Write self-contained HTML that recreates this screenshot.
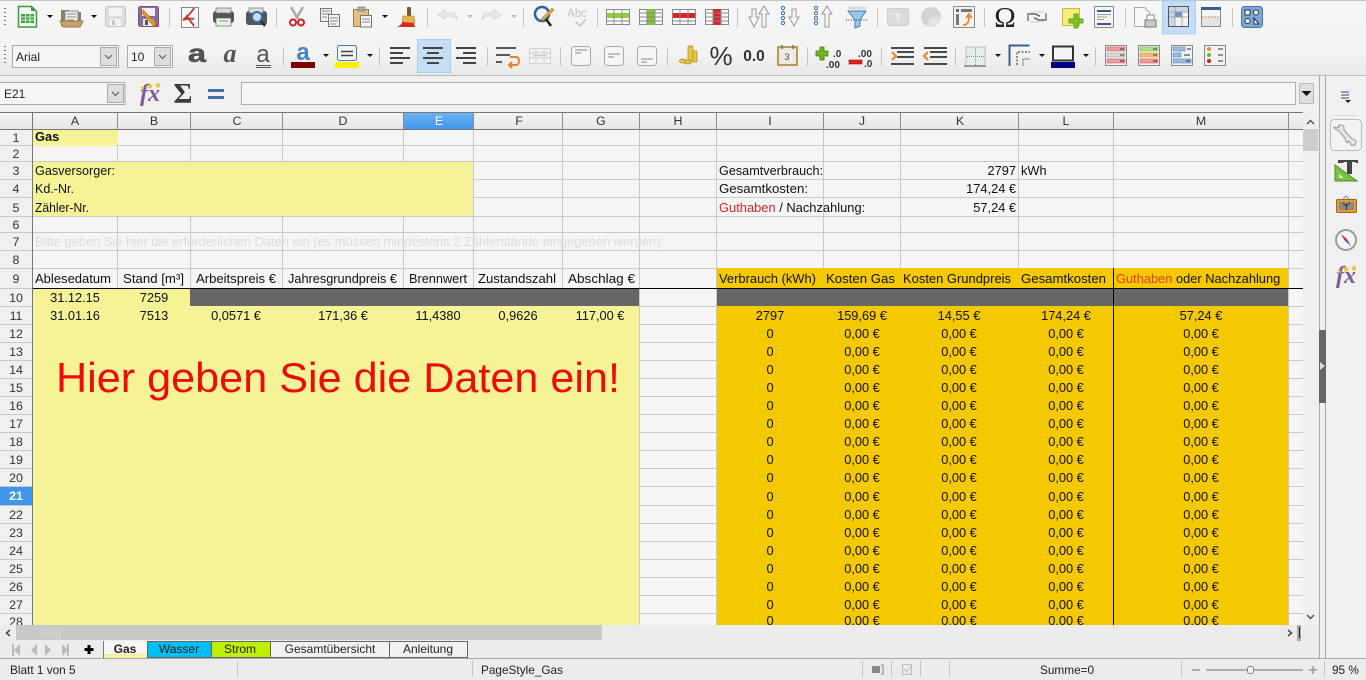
<!DOCTYPE html>
<html><head><meta charset="utf-8"><title>Gas</title>
<style>
html,body{margin:0;padding:0;background:#f0f0f0;overflow:hidden;width:1366px;height:680px}
svg{display:block;font-family:"Liberation Sans",Arial,sans-serif}
.c text{font-size:12.8px;fill:#111}
.m text{text-anchor:middle}
.e{text-anchor:end}
.h text{font-size:12.4px;fill:#333;text-anchor:middle}
.g line{stroke:#c9c9c9;stroke-width:1}
.s line{stroke:#c4c4c4;stroke-width:1}
.d{fill:#111}
</style></head><body>
<svg width="1366" height="680" viewBox="0 0 1366 680" xmlns="http://www.w3.org/2000/svg">
<defs>
<linearGradient id="tb" x1="0" y1="0" x2="0" y2="1"><stop offset="0" stop-color="#f6f6f6"/><stop offset=".7" stop-color="#f3f3f3"/><stop offset="1" stop-color="#e9e9e9"/></linearGradient>
<linearGradient id="hd" x1="0" y1="0" x2="0" y2="1"><stop offset="0" stop-color="#f4f4f4"/><stop offset="1" stop-color="#e6e6e6"/></linearGradient>
<linearGradient id="sel" x1="0" y1="0" x2="0" y2="1"><stop offset="0" stop-color="#6fb4f4"/><stop offset="1" stop-color="#3f95ec"/></linearGradient>
<clipPath id="sheet"><rect x="0" y="112" width="1303" height="513"/></clipPath>
</defs>

<!-- toolbars -->
<rect width="1366" height="112" fill="#f0f0f0"/>
<rect y="1" width="1366" height="74" fill="url(#tb)"/>
<rect width="1366" height="1" fill="#c4c4c4"/>
<rect y="75" width="1366" height="1" fill="#bdbdbd"/>
<rect x="1162.500" y="1" width="33" height="33" fill="#c5def5" stroke="#a9d0f0"/>
<rect x="417.500" y="39.500" width="33" height="33" fill="#c5def5" stroke="#a9d0f0"/>

<!-- grips -->
<g fill="#777"><rect x="4" y="8" width="2" height="1"/><rect x="4" y="12" width="2" height="1"/><rect x="4" y="16" width="2" height="1"/><rect x="4" y="20" width="2" height="1"/><rect x="4" y="24" width="2" height="1"/><rect x="4" y="46" width="2" height="1"/><rect x="4" y="50" width="2" height="1"/><rect x="4" y="54" width="2" height="1"/><rect x="4" y="58" width="2" height="1"/><rect x="4" y="62" width="2" height="1"/></g>

<!-- separators -->
<g class="s">
<line x1="169.500" y1="8" x2="169.500" y2="27"/><line x1="276.500" y1="8" x2="276.500" y2="27"/><line x1="427.500" y1="8" x2="427.500" y2="27"/><line x1="523.500" y1="8" x2="523.500" y2="27"/><line x1="597.500" y1="8" x2="597.500" y2="27"/><line x1="737.500" y1="8" x2="737.500" y2="27"/><line x1="877.500" y1="8" x2="877.500" y2="27"/><line x1="984.500" y1="8" x2="984.500" y2="27"/><line x1="1125.500" y1="8" x2="1125.500" y2="27"/><line x1="1232.500" y1="8" x2="1232.500" y2="27"/>
<line x1="283.500" y1="47" x2="283.500" y2="66"/><line x1="379.500" y1="47" x2="379.500" y2="66"/><line x1="487.500" y1="47" x2="487.500" y2="66"/><line x1="560.500" y1="47" x2="560.500" y2="66"/><line x1="667.500" y1="47" x2="667.500" y2="66"/><line x1="807.500" y1="47" x2="807.500" y2="66"/><line x1="881.500" y1="47" x2="881.500" y2="66"/><line x1="955.500" y1="47" x2="955.500" y2="66"/><line x1="1095.500" y1="47" x2="1095.500" y2="66"/>
</g>

<!-- small dropdown arrows -->
<g class="d">
<path d="M47 15h6l-3 3zM91 15h6l-3 3zM382 15h6l-3 3z"/>
<path d="M323 54h6l-3 3zM367 54h6l-3 3zM995 54h6l-3 3zM1039 54h6l-3 3zM1083 54h6l-3 3z"/>
</g>
<path d="M467 15h6l-3 3zM511 15h6l-3 3z" fill="#bbb"/>

<!-- ROW 1 ICONS -->
<!-- calc new -->
<path d="M18.500 6.500h13l5 5v15.500h-18z" fill="#f4fbf2" stroke="#3f9a3f" stroke-width="1.500"/><path d="M31 6l5 5h-5z" fill="#3a9a3a"/><rect x="21" y="14" width="13" height="9" fill="#3da33d"/><path d="M21 17h13M21 20h13M25.500 14v9M30 14v9" stroke="#d8f0d8"/>
<!-- open -->
<path d="M61 10h8l2 2h10v14H61z" fill="#8f7f66"/><rect x="65" y="11" width="13" height="12" fill="#f0efe8" stroke="#888"/><path d="M67 14h9M67 17h9M67 20h7" stroke="#888"/><path d="M60 21h23l-3 6H63z" fill="#c8a06a" stroke="#9a7a4c"/>
<!-- save grey -->
<rect x="105.500" y="6.500" width="20" height="20" rx="2" fill="#dedede" stroke="#c8c8c8"/><rect x="109" y="8" width="13" height="8" fill="#f3f3f3"/><rect x="110" y="19" width="11" height="7" fill="#f4f4f4"/><rect x="112" y="20" width="3" height="5" fill="#c8c8c8"/>
<!-- save as -->
<rect x="138.500" y="6.500" width="20" height="20" rx="2" fill="#8a6d98" stroke="#6d5a7c"/><rect x="142" y="8" width="13" height="8" fill="#f2eef4"/><rect x="143" y="19" width="11" height="7" fill="#e8e8e8"/><rect x="145" y="20" width="3" height="5" fill="#555"/><path d="M143 10l14 14-3 2-13-14z" fill="#e79a33" stroke="#a85f1a" stroke-width=".6"/><path d="M156 24l4 3-5-.5z" fill="#d33"/>
<!-- pdf -->
<rect x="181.500" y="7.500" width="17" height="20" fill="#f7f7f7" stroke="#888"/><path d="M194 8c-3 6-8 9-11 12 3-1 6-2 11-1M187 15c0 3 4 6 7 11" fill="none" stroke="#c9302c" stroke-width="1.800"/>
<!-- print -->
<rect x="213" y="11" width="21" height="12" rx="3" fill="#555"/><rect x="216" y="8" width="15" height="5" fill="#ddd" stroke="#777" stroke-width=".7"/><rect x="216" y="18" width="15" height="8" fill="#eaf3e8" stroke="#666" stroke-width=".7"/><path d="M219 21h9" stroke="#6a6"/>
<!-- preview -->
<rect x="246" y="11" width="21" height="14" rx="3" fill="#555"/><rect x="249" y="8" width="14" height="5" fill="#ddd" stroke="#777" stroke-width=".7"/><circle cx="257" cy="17" r="5" fill="#cde" stroke="#2f6db0" stroke-width="2"/><path d="M261 21l4 5" stroke="#333" stroke-width="2.500"/>
<!-- cut -->
<path d="M291 7l7 12M303 7l-7 12" stroke="#aaa" stroke-width="2.500"/><circle cx="293" cy="22.500" r="3" fill="none" stroke="#c22" stroke-width="2"/><circle cx="301" cy="22.500" r="3" fill="none" stroke="#c22" stroke-width="2"/>
<!-- copy -->
<rect x="320.500" y="8.500" width="11" height="13" fill="#f2f2f2" stroke="#777"/><path d="M322 11h8M322 14h8M322 17h5" stroke="#888"/><rect x="328.500" y="14.500" width="11" height="12" fill="#f2f2f2" stroke="#777"/><path d="M330 18h8M330 21h8M330 24h6" stroke="#888"/>
<!-- paste -->
<rect x="353.500" y="9.500" width="15" height="17" fill="#e6bd85" stroke="#a07a45"/><rect x="358" y="7" width="7" height="4" fill="#aaa" stroke="#777" stroke-width=".6"/><rect x="360.500" y="15.500" width="11" height="11.500" fill="#f4f4f4" stroke="#777"/><path d="M362 19h8M362 22h8" stroke="#888"/>
<!-- brush -->
<rect x="407" y="7" width="4" height="9" rx="1" fill="#7a5a30"/><path d="M403 16h11l1 7h-13z" fill="#e7b54e" stroke="#9a7a30" stroke-width=".6"/><path d="M397 27c3-1 5-4 6-5l11 1 1 4z" fill="#d62828"/>
<!-- undo / redo -->
<path d="M438 15l7-5v3h7c4 0 5 3 5 7-1-3-3-4-5-4h-7v3z" fill="#ececec" stroke="#d6d6d6"/>
<path d="M501 15l-7-5v3h-7c-4 0-5 3-5 7 1-3 3-4 5-4h7v3z" fill="#ececec" stroke="#d6d6d6"/>
<!-- find -->
<circle cx="542" cy="14" r="7" fill="#eef4fb" stroke="#2f5f9f" stroke-width="2.500"/><path d="M546 19l5 7" stroke="#222" stroke-width="2.500"/><path d="M541 19l11-11 2 2-11 11z" fill="#e9a23b" stroke="#9a6a1a" stroke-width=".5"/>
<!-- abc -->
<text x="577" y="17" font-size="11.500" fill="#c4c4c4" text-anchor="middle">Abc</text><path d="M576 22l4 4 6-7" fill="none" stroke="#ccc" stroke-width="1.800"/>
<!-- table row/col ops -->
<g fill="#fafafa" stroke="#8a8a8a">
<rect x="606.500" y="9.500" width="23" height="15"/><rect x="639.500" y="9.500" width="23" height="15"/><rect x="672.500" y="9.500" width="23" height="15"/><rect x="705.500" y="9.500" width="23" height="15"/>
</g>
<path d="M607 13h22v5h-22z" fill="#8fce3a"/><path d="M647 9h8v16h-8z" fill="#7fc62e"/><path d="M673 13h22v5h-22z" fill="#d9232b"/><path d="M713 9h8v16h-8z" fill="#d9232b"/>
<path d="M614 10v14M622 10v14M607 21h22M647 10v14M655 10v14M640 13h22M640 17h22M640 21h22M680 10v14M688 10v14M673 21h22M713 10v14M721 10v14M706 13h22M706 17h22M706 21h22" stroke="#8a8a8a" stroke-width=".9" fill="none"/>
<!-- sort -->
<path d="M749 17h3V9h4v8h3l-5 10zM759 14l5-8 5 8h-3v13h-4V14z" fill="#f5f5f5" stroke="#9a9a9a"/>
<g fill="none" stroke="#3a6ea8"><circle cx="783" cy="8" r="1.600"/><circle cx="783" cy="13" r="1.600"/><circle cx="783" cy="18" r="1.600"/><circle cx="783" cy="23" r="1.600"/><circle cx="816" cy="8" r="1.600"/><circle cx="816" cy="13" r="1.600"/><circle cx="816" cy="18" r="1.600"/><circle cx="816" cy="23" r="1.600"/></g>
<path d="M789 17h3V9h4v8h3l-5 9z" fill="#f5f5f5" stroke="#9a9a9a"/><path d="M822 14l5-8 5 8h-3v13h-4V14z" fill="#f5f5f5" stroke="#9a9a9a"/>
<!-- filter -->
<path d="M848 11h18l-6 9v6l-5 2v-8z" fill="#9cc7ec" stroke="#4a80b4"/><path d="M848 8h18" stroke="#ddd" stroke-width="3"/><path d="M846 20h22" stroke="#333" stroke-dasharray="1 1.500"/>
<!-- image grey -->
<rect x="887.500" y="8.500" width="21" height="17" rx="2" fill="#dcdcdc" stroke="#cdcdcd"/><path d="M898 12v10M895 13l3 4 3-4" stroke="#f2f2f2" fill="none"/>
<!-- chart -->
<circle cx="931" cy="17" r="10" fill="#d4d4d4"/><path d="M931 17l10 0a10 10 0 0 1-15 8.500z" fill="#e2e2e2"/>
<!-- pivot -->
<rect x="953.500" y="6.500" width="21" height="21" fill="#f4f4f4" stroke="#888"/><rect x="956" y="9" width="3" height="3" fill="#666"/><rect x="956" y="14" width="3" height="11" fill="#777"/><rect x="961" y="9" width="11" height="3" fill="#777"/><path d="M963 25c6 0 6-6 6-9m-3 2l3-4 3 4" fill="none" stroke="#e08a2a" stroke-width="1.800"/>
<!-- omega -->
<text x="1005" y="27" font-size="29" font-family="Liberation Serif" text-anchor="middle" fill="#222">Ω</text>
<!-- hyperlink -->
<path d="M1028 14h7c2 0 3 2 5 2M1046 20h-7c-2 0-3-2-5-2" stroke="#666" stroke-width="1.600" fill="none"/><path d="M1028 13v8M1046 13v8" stroke="#999" stroke-width="2"/><path d="M1030 12h14M1030 22h14" stroke="#ccc"/>
<!-- note -->
<rect x="1062.500" y="8.500" width="17" height="17" fill="#f6ec7a" stroke="#c8b83a"/><path d="M1074 14h4v5h5v4h-5v5h-4v-5h-5v-4h5z" fill="#7ec626" stroke="#4d8f17" stroke-width=".8"/>
<!-- doc/header -->
<rect x="1094.500" y="6.500" width="19" height="21" rx="1" fill="#f6f6f6" stroke="#888"/><path d="M1097 11h14" stroke="#35598c" stroke-width="2"/><path d="M1097 14.500h14M1097 17h10M1097 19.500h7" stroke="#999"/><path d="M1097 24h14" stroke="#35598c" stroke-width="2"/>
<!-- print area -->
<path d="M1134.500 7.500h10l5 5v14h-15z" fill="#f8f8f8" stroke="#aaa"/><rect x="1145" y="20" width="11" height="7" fill="#c8c8c8" stroke="#777"/><rect x="1147" y="15" width="7" height="5" fill="#fff" stroke="#888"/>
<!-- freeze -->
<rect x="1168.500" y="6.500" width="20" height="20" fill="#f4f4f4" stroke="#555"/><rect x="1169" y="7" width="6" height="19" fill="#c9d7e6"/><rect x="1175" y="7" width="13" height="5" fill="#c9d7e6"/><rect x="1175" y="12" width="7" height="5" fill="#6f96c7"/><path d="M1175 7v19M1169 17h19M1182 12v14M1169 12h19" stroke="#999" stroke-width=".8"/>
<!-- header footer -->
<rect x="1201.500" y="7.500" width="19" height="19" fill="#e4e4e4" stroke="#888"/><rect x="1201" y="7" width="20" height="3" fill="#3b5e90"/><rect x="1202" y="10" width="18" height="7" fill="#f6f6f6"/><path d="M1202 17h18" stroke="#e8902e" stroke-dasharray="2 1"/>
<!-- shapes -->
<rect x="1241.500" y="6.500" width="21" height="21" rx="3" fill="#7ea6d6" stroke="#4a78ae"/><rect x="1245" y="10" width="5" height="5" fill="#fff" stroke="#234"/><circle cx="1256" cy="12.500" r="2.500" fill="#fff" stroke="#234"/><circle cx="1247.500" cy="21" r="2.500" fill="#fff" stroke="#234"/><path d="M1254 18l5 6h-5z" fill="#fff" stroke="#234"/>

<!-- ROW 2 -->
<rect x="12.500" y="45.500" width="106" height="22" fill="#f6f6f6" stroke="#a9a9a9"/><rect x="100.500" y="47.500" width="16" height="18" fill="#dedede" stroke="#aaa"/><path d="M105 55l3.500 3.500 3.500-3.500" fill="none" stroke="#555"/>
<text x="16" y="61" font-size="12" fill="#222">Arial</text>
<rect x="127.500" y="45.500" width="45" height="22" fill="#f6f6f6" stroke="#a9a9a9"/><rect x="154.500" y="47.500" width="16" height="18" fill="#dedede" stroke="#aaa"/><path d="M159 55l3.500 3.500 3.500-3.500" fill="none" stroke="#555"/>
<text x="131" y="61" font-size="12" fill="#222">10</text>
<text x="188" y="62" font-size="25" font-weight="bold" textLength="18" lengthAdjust="spacingAndGlyphs" fill="#555" stroke="#444" stroke-width=".5">a</text>
<text x="230" y="62" font-size="26" font-weight="bold" font-style="italic" font-family="Liberation Serif" text-anchor="middle" fill="#555">a</text>
<text x="263" y="62" font-size="24" text-anchor="middle" fill="#555">a</text><path d="M256 65.500h15M256 67.500h15" stroke="#555"/>
<text x="303" y="60" font-size="24" font-weight="bold" text-anchor="middle" fill="#4a80c0">a</text><rect x="291" y="62" width="24" height="6" fill="#800000"/>
<rect x="337.500" y="45.500" width="19" height="15" rx="2" fill="#f4f4f4" stroke="#4a78ae"/><path d="M341 51.500h12M341 55.500h12" stroke="#444" stroke-width="1.600"/><rect x="335" y="62" width="24" height="6" fill="#f7f000"/>
<!-- align -->
<g stroke="#444" stroke-width="2"><path d="M390 48h20M390 53h13M390 58h20M390 63h13"/><path d="M423 48h20M427 53h12M423 58h20M427 63h12"/><path d="M456 48h20M463 53h13M456 58h20M463 63h13"/></g>
<!-- wrap -->
<path d="M496 48h20M496 55h14M496 62h6" stroke="#444" stroke-width="1.800"/><path d="M510 57h6c4 0 4 8 0 8h-7m3-3l-3 3 3 3" fill="none" stroke="#e0832a" stroke-width="2"/>
<!-- merge -->
<rect x="529.500" y="48.500" width="21" height="15" fill="#f2f2f2" stroke="#d4d4d4"/><path d="M530 53h20M530 58h20M536 49v4M544 49v4M536 58v5M544 58v5" stroke="#d4d4d4"/><path d="M533 55.500h14" stroke="#c8c8c8" stroke-width="1.500"/>
<!-- v align -->
<g fill="#f6f6f6" stroke="#aaa"><rect x="571.500" y="46.500" width="19" height="19" rx="3"/><rect x="604.500" y="46.500" width="19" height="19" rx="3"/><rect x="637.500" y="46.500" width="19" height="19" rx="3"/></g>
<path d="M575 50h12M575 53h6M608 54h12M608 57h6M641 59h12M641 62h6" stroke="#888"/>
<!-- currency -->
<g fill="#e6c840" stroke="#a88a20" stroke-width=".7"><rect x="688" y="46" width="5" height="15" rx="1"/><rect x="693" y="51" width="4" height="11" rx="1"/><ellipse cx="683" cy="61" rx="3.500" ry="2"/><ellipse cx="688" cy="62" rx="3.500" ry="2"/></g>
<!-- percent -->
<text x="721" y="65" font-size="26" text-anchor="middle" fill="#333">%</text>
<text x="754" y="61" font-size="15.500" font-weight="bold" text-anchor="middle" fill="#333">0.0</text>
<!-- date -->
<rect x="778" y="47" width="19" height="18" fill="#f0e8d0" stroke="#a97c36" stroke-width="1.500"/><rect x="781" y="50" width="13" height="12" fill="#ececec"/><path d="M782 45v4M793 45v4" stroke="#777" stroke-width="1.600"/><text x="787" y="60" font-size="9" text-anchor="middle" fill="#444">3</text>
<!-- add/del decimals -->
<path d="M820 47h4v4h4v5h-4v4h-4v-4h-4v-5h4z" fill="#6cb71f" stroke="#467d10" stroke-width=".8"/>
<text x="833" y="57" font-size="10" fill="#333" font-weight="bold">.0</text><text x="826" y="68" font-size="10" fill="#333" font-weight="bold">.00</text>
<rect x="849" y="60" width="13" height="4" fill="#d22" stroke="#a11" stroke-width=".6"/>
<text x="858" y="57" font-size="10" fill="#333" font-weight="bold">.00</text><text x="864" y="67" font-size="10" fill="#333" font-weight="bold">.0</text>
<!-- indent -->
<path d="M891 48h23M897 52h17M897 57h17M891 64h23" stroke="#333" stroke-width="1.800"/><path d="M892 52l4 4-4 4" fill="none" stroke="#e0832a" stroke-width="2"/>
<path d="M924 48h23M930 52h17M930 57h17M924 64h23" stroke="#333" stroke-width="1.800"/><path d="M928 52l-4 4 4 4" fill="none" stroke="#e0832a" stroke-width="2"/>
<!-- borders -->
<rect x="966" y="47" width="19" height="19" fill="#e9eee9" stroke="#bbb"/><path d="M975.500 48v17M967 56.500h18" stroke="#6a8cb5" stroke-dasharray="1 1"/><path d="M964 66h22" stroke="#999" stroke-width="2"/>
<path d="M1009.500 66V45.500h20" fill="none" stroke="#3b5e90" stroke-width="2"/><path d="M1017 65V52h13" fill="none" stroke="#222" stroke-dasharray="2 1.500"/><path d="M1023 66v-7h7" fill="none" stroke="#888"/>
<rect x="1053" y="46.500" width="20" height="14" fill="#f4f4f4" stroke="#333" stroke-width="2"/><rect x="1051" y="62" width="24" height="6" fill="#000080"/>
<!-- conditional -->
<g stroke="#8a8a8a" fill="#f2f2f2">
<rect x="1105.500" y="45.500" width="21" height="20"/><rect x="1138.500" y="45.500" width="21" height="20"/><rect x="1171.500" y="45.500" width="21" height="20"/><rect x="1204.500" y="45.500" width="21" height="20"/>
</g>
<path d="M1107 47h18v4h-18zM1107 59h18v4h-18z" fill="#f4999c" stroke="#b55" stroke-width=".5"/><path d="M1107 53h18v4h-18z" fill="#d8d8d8" stroke="#999" stroke-width=".5"/>
<path d="M1140 47h18v4h-18z" fill="#b8e28a" stroke="#6a3" stroke-width=".5"/><path d="M1140 53h18v4h-18z" fill="#f5bd6b" stroke="#c83" stroke-width=".5"/><path d="M1140 59h18v4h-18z" fill="#f4999c" stroke="#b55" stroke-width=".5"/>
<path d="M1173 47h12v4h-12zM1173 53h8v4h-8zM1173 59h18v4h-18z" fill="#9dbde0" stroke="#47a" stroke-width=".5"/>
<path d="M1120 49h4M1120 55h4M1120 61h4M1153 49h4M1153 55h4M1153 61h4M1187 49h4M1184 55h6M1186 61h4M1218 49h5M1218 55h5M1218 61h5" stroke="#333"/>
<circle cx="1209" cy="49" r="2" fill="#e8952d"/><circle cx="1209" cy="55" r="2" fill="#6cb71f"/><circle cx="1209" cy="61" r="2" fill="#c22"/>

<!-- FORMULA BAR -->
<rect x="0" y="76" width="1319" height="36" fill="#f0f0f0"/>
<rect x="-1" y="82.500" width="126" height="22" fill="#f6f6f6" stroke="#a9a9a9"/><rect x="107.500" y="84.500" width="16" height="18" fill="#dedede" stroke="#aaa"/><path d="M112 92l3.500 3.500 3.500-3.500" fill="none" stroke="#555"/>
<text x="4" y="98" font-size="12" fill="#222">E21</text>
<text x="140" y="101" font-size="24" font-style="italic" font-weight="bold" font-family="Liberation Serif" textLength="20" lengthAdjust="spacingAndGlyphs" fill="#7d5a9a">fx</text>
<path d="M158 82l1 2 2 .5-1.500 1.500.5 2-2-1-2 1 .5-2-1.500-1.500 2-.5zM150 83l1 2 2 .5-1.500 1.500.5 2-2-1-2 1 .5-2-1.500-1.500 2-.5zM142 86l1 1.500h1.500l-1 1 .5 1.500-1.500-.5-1.500.5.500-1.500-1-1H141z" fill="#e9c52e"/>
<text x="183" y="103" font-size="29" font-weight="bold" font-family="Liberation Serif" text-anchor="middle" fill="#3a3a3a">Σ</text>
<path d="M208 90.500h16M208 97.500h16" stroke="#3f6ea8" stroke-width="3"/>
<rect x="241.500" y="82.500" width="1054" height="22" fill="#f6f6f6" stroke="#b0b0b0"/>
<rect x="1299.500" y="83.500" width="14" height="20" fill="#dedede" stroke="#bbb"/><path d="M1301.500 91h10l-5 5z" fill="#111"/>

<!-- SHEET -->
<g clip-path="url(#sheet)">
<rect x="0" y="112" width="1303" height="513" fill="#f5f5f5"/>
<rect x="0" y="112" width="1303" height="18" fill="url(#hd)"/>
<rect x="404" y="112" width="69" height="18" fill="url(#sel)"/>
<rect x="0" y="130" width="32" height="500" fill="#f0f0f0"/>
<rect x="0" y="486" width="32" height="19" fill="#3f95ec"/>

<!-- fills -->
<rect x="33" y="129" width="85" height="17" fill="#f5f396"/>
<rect x="33" y="161" width="441" height="55" fill="#f5f396"/>
<rect x="33" y="288" width="157" height="19" fill="#f5f396"/>
<rect x="190" y="288" width="450" height="18" fill="#666"/>
<rect x="33" y="306" width="607" height="320" fill="#f5f396"/>
<rect x="717" y="268" width="571" height="20" fill="#f5c900"/>
<rect x="717" y="288" width="571" height="18" fill="#666"/>
<rect x="717" y="306" width="571" height="320" fill="#f5c900"/>

<!-- grid: horizontals upper -->
<g class="g">
<line x1="118" y1="145.500" x2="1303" y2="145.500"/><line x1="33" y1="161.500" x2="1303" y2="161.500"/>
<line x1="474" y1="179.500" x2="1303" y2="179.500"/><line x1="474" y1="197.500" x2="1303" y2="197.500"/>
<line x1="33" y1="216.500" x2="1303" y2="216.500"/><line x1="33" y1="232.500" x2="1303" y2="232.500"/><line x1="33" y1="250.500" x2="1303" y2="250.500"/><line x1="33" y1="268.500" x2="717" y2="268.500"/><line x1="1288" y1="268.500" x2="1303" y2="268.500"/>
<line x1="117.500" y1="145" x2="117.500" y2="161"/><line x1="117.500" y1="216" x2="117.500" y2="288"/>
<line x1="190.500" y1="130" x2="190.500" y2="161"/><line x1="190.500" y1="216" x2="190.500" y2="288"/>
<line x1="282.500" y1="130" x2="282.500" y2="161"/><line x1="282.500" y1="216" x2="282.500" y2="288"/>
<line x1="403.500" y1="130" x2="403.500" y2="161"/><line x1="403.500" y1="216" x2="403.500" y2="288"/>
<line x1="473.500" y1="130" x2="473.500" y2="288"/><line x1="562.500" y1="130" x2="562.500" y2="288"/><line x1="639.500" y1="130" x2="639.500" y2="625"/><line x1="716.500" y1="130" x2="716.500" y2="625"/>
<line x1="823.500" y1="130" x2="823.500" y2="268"/><line x1="900.500" y1="130" x2="900.500" y2="268"/><line x1="1018.500" y1="130" x2="1018.500" y2="268"/><line x1="1113.500" y1="130" x2="1113.500" y2="268"/>
<line x1="1288.500" y1="130" x2="1288.500" y2="625"/>
<!-- H and N column rows -->
<line x1="640" y1="306.500" x2="717" y2="306.500"/><line x1="640" y1="324.500" x2="717" y2="324.500"/><line x1="640" y1="342.500" x2="717" y2="342.500"/><line x1="640" y1="360.500" x2="717" y2="360.500"/><line x1="640" y1="378.500" x2="717" y2="378.500"/><line x1="640" y1="396.500" x2="717" y2="396.500"/><line x1="640" y1="414.500" x2="717" y2="414.500"/><line x1="640" y1="432.500" x2="717" y2="432.500"/><line x1="640" y1="450.500" x2="717" y2="450.500"/><line x1="640" y1="468.500" x2="717" y2="468.500"/><line x1="640" y1="486.500" x2="717" y2="486.500"/><line x1="640" y1="505.500" x2="717" y2="505.500"/><line x1="640" y1="523.500" x2="717" y2="523.500"/><line x1="640" y1="541.500" x2="717" y2="541.500"/><line x1="640" y1="559.500" x2="717" y2="559.500"/><line x1="640" y1="577.500" x2="717" y2="577.500"/><line x1="640" y1="595.500" x2="717" y2="595.500"/><line x1="640" y1="613.500" x2="717" y2="613.500"/>
<line x1="1288" y1="306.500" x2="1303" y2="306.500"/><line x1="1288" y1="324.500" x2="1303" y2="324.500"/><line x1="1288" y1="342.500" x2="1303" y2="342.500"/><line x1="1288" y1="360.500" x2="1303" y2="360.500"/><line x1="1288" y1="378.500" x2="1303" y2="378.500"/><line x1="1288" y1="396.500" x2="1303" y2="396.500"/><line x1="1288" y1="414.500" x2="1303" y2="414.500"/><line x1="1288" y1="432.500" x2="1303" y2="432.500"/><line x1="1288" y1="450.500" x2="1303" y2="450.500"/><line x1="1288" y1="468.500" x2="1303" y2="468.500"/><line x1="1288" y1="486.500" x2="1303" y2="486.500"/><line x1="1288" y1="505.500" x2="1303" y2="505.500"/><line x1="1288" y1="523.500" x2="1303" y2="523.500"/><line x1="1288" y1="541.500" x2="1303" y2="541.500"/><line x1="1288" y1="559.500" x2="1303" y2="559.500"/><line x1="1288" y1="577.500" x2="1303" y2="577.500"/><line x1="1288" y1="595.500" x2="1303" y2="595.500"/><line x1="1288" y1="613.500" x2="1303" y2="613.500"/>
<!-- row header row lines -->
<line x1="0" y1="145.500" x2="33" y2="145.500"/><line x1="0" y1="161.500" x2="33" y2="161.500"/><line x1="0" y1="179.500" x2="33" y2="179.500"/><line x1="0" y1="197.500" x2="33" y2="197.500"/><line x1="0" y1="216.500" x2="33" y2="216.500"/><line x1="0" y1="232.500" x2="33" y2="232.500"/><line x1="0" y1="250.500" x2="33" y2="250.500"/><line x1="0" y1="268.500" x2="33" y2="268.500"/><line x1="0" y1="288.500" x2="33" y2="288.500"/><line x1="0" y1="306.500" x2="33" y2="306.500"/><line x1="0" y1="324.500" x2="33" y2="324.500"/><line x1="0" y1="342.500" x2="33" y2="342.500"/><line x1="0" y1="360.500" x2="33" y2="360.500"/><line x1="0" y1="378.500" x2="33" y2="378.500"/><line x1="0" y1="396.500" x2="33" y2="396.500"/><line x1="0" y1="414.500" x2="33" y2="414.500"/><line x1="0" y1="432.500" x2="33" y2="432.500"/><line x1="0" y1="450.500" x2="33" y2="450.500"/><line x1="0" y1="468.500" x2="33" y2="468.500"/><line x1="0" y1="486.500" x2="33" y2="486.500"/><line x1="0" y1="505.500" x2="33" y2="505.500"/><line x1="0" y1="523.500" x2="33" y2="523.500"/><line x1="0" y1="541.500" x2="33" y2="541.500"/><line x1="0" y1="559.500" x2="33" y2="559.500"/><line x1="0" y1="577.500" x2="33" y2="577.500"/><line x1="0" y1="595.500" x2="33" y2="595.500"/><line x1="0" y1="613.500" x2="33" y2="613.500"/>
</g>

<!-- header lines -->
<path d="M0 129.500h1303M32.500 112v513M0 112.500h1303" stroke="#777" fill="none"/>
<path d="M117.500 112v18M190.500 112v18M282.500 112v18M403.500 112v18M473.500 112v18M562.500 112v18M639.500 112v18M716.500 112v18M823.500 112v18M900.500 112v18M1018.500 112v18M1113.500 112v18M1288.500 112v18" stroke="#8a8a8a"/>
<!-- black lines -->
<path d="M33 288.500h1270" stroke="#000"/>
<path d="M1113.500 268v357" stroke="#000"/>

<!-- column headers -->
<g class="h">
<text x="75" y="125">A</text><text x="154" y="125">B</text><text x="237" y="125">C</text><text x="343" y="125">D</text><text x="439" y="125" style="fill:#fff">E</text><text x="519" y="125">F</text><text x="601" y="125">G</text><text x="678" y="125">H</text><text x="770" y="125">I</text><text x="862" y="125">J</text><text x="960" y="125">K</text><text x="1066" y="125">L</text><text x="1201" y="125">M</text>
<text x="16" y="142">1</text><text x="16" y="158">2</text><text x="16" y="175">3</text><text x="16" y="193">4</text><text x="16" y="212">5</text><text x="16" y="229">6</text><text x="16" y="246">7</text><text x="16" y="264">8</text><text x="16" y="283">9</text><text x="16" y="302">10</text><text x="16" y="320">11</text><text x="16" y="338">12</text><text x="16" y="356">13</text><text x="16" y="374">14</text><text x="16" y="392">15</text><text x="16" y="410">16</text><text x="16" y="428">17</text><text x="16" y="446">18</text><text x="16" y="464">19</text><text x="16" y="482">20</text><text x="16" y="500" style="fill:#fff;font-weight:bold">21</text><text x="16" y="519">22</text><text x="16" y="537">23</text><text x="16" y="555">24</text><text x="16" y="573">25</text><text x="16" y="591">26</text><text x="16" y="609">27</text><text x="16" y="626">28</text>
</g>

<!-- cell text -->
<g class="c">
<text x="35" y="141" style="font-weight:bold">Gas</text>
<text x="35" y="175" textLength="80" lengthAdjust="spacingAndGlyphs">Gasversorger:</text><text x="35" y="193" textLength="39" lengthAdjust="spacingAndGlyphs">Kd.-Nr.</text><text x="35" y="212" textLength="54" lengthAdjust="spacingAndGlyphs">Zähler-Nr.</text>
<text x="35" y="246" style="fill:#dcdcdc" textLength="629" lengthAdjust="spacingAndGlyphs">Bitte geben Sie hier die erforderlichen Daten ein (es müssen mindestens 2 Zählerstände eingegeben werden):</text>
<text x="35" y="283" textLength="76" lengthAdjust="spacingAndGlyphs">Ablesedatum</text><text x="123" y="283" textLength="61" lengthAdjust="spacingAndGlyphs">Stand [m³]</text><text x="196" y="283" textLength="80" lengthAdjust="spacingAndGlyphs">Arbeitspreis €</text><text x="288" y="283" textLength="109" lengthAdjust="spacingAndGlyphs">Jahresgrundpreis €</text><text x="409" y="283" textLength="58" lengthAdjust="spacingAndGlyphs">Brennwert</text><text x="478" y="283" textLength="78" lengthAdjust="spacingAndGlyphs">Zustandszahl</text><text x="568" y="283" textLength="67" lengthAdjust="spacingAndGlyphs">Abschlag €</text>
<text x="719" y="175" textLength="104" lengthAdjust="spacingAndGlyphs">Gesamtverbrauch:</text><text x="719" y="193" textLength="89" lengthAdjust="spacingAndGlyphs">Gesamtkosten:</text><text x="719" y="212" style="font-size:12.9px"><tspan fill="#d9222a">Guthaben</tspan> / Nachzahlung:</text>
<text class="e" x="1016" y="175">2797</text><text class="e" x="1016" y="193">174,24 €</text><text class="e" x="1016" y="212">57,24 €</text><text x="1021" y="175">kWh</text>
<text x="719" y="283" textLength="97" lengthAdjust="spacingAndGlyphs">Verbrauch (kWh)</text><text x="826" y="283" textLength="69" lengthAdjust="spacingAndGlyphs">Kosten Gas</text><text x="903" y="283" textLength="108" lengthAdjust="spacingAndGlyphs">Kosten Grundpreis</text><text x="1021" y="283" textLength="85" lengthAdjust="spacingAndGlyphs">Gesamtkosten</text><text x="1116" y="283" style="font-size:12.85px"><tspan fill="#e8400a">Guthaben</tspan> oder Nachzahlung</text>
</g>
<g class="c m">
<text x="75" y="302">31.12.15</text><text x="154" y="302">7259</text>
<text x="75" y="320">31.01.16</text><text x="154" y="320">7513</text><text x="236" y="320">0,0571 €</text><text x="343" y="320">171,36 €</text><text x="438" y="320">11,4380</text><text x="518" y="320">0,9626</text><text x="600" y="320">117,00 €</text>
<text x="770" y="320">2797</text><text x="862" y="320">159,69 €</text><text x="959" y="320">14,55 €</text><text x="1066" y="320">174,24 €</text><text x="1201" y="320">57,24 €</text>
<text x="770" y="338">0</text><text x="862" y="338">0,00 €</text><text x="959" y="338">0,00 €</text><text x="1066" y="338">0,00 €</text><text x="1201" y="338">0,00 €</text>
<text x="770" y="356">0</text><text x="862" y="356">0,00 €</text><text x="959" y="356">0,00 €</text><text x="1066" y="356">0,00 €</text><text x="1201" y="356">0,00 €</text>
<text x="770" y="374">0</text><text x="862" y="374">0,00 €</text><text x="959" y="374">0,00 €</text><text x="1066" y="374">0,00 €</text><text x="1201" y="374">0,00 €</text>
<text x="770" y="392">0</text><text x="862" y="392">0,00 €</text><text x="959" y="392">0,00 €</text><text x="1066" y="392">0,00 €</text><text x="1201" y="392">0,00 €</text>
<text x="770" y="410">0</text><text x="862" y="410">0,00 €</text><text x="959" y="410">0,00 €</text><text x="1066" y="410">0,00 €</text><text x="1201" y="410">0,00 €</text>
<text x="770" y="428">0</text><text x="862" y="428">0,00 €</text><text x="959" y="428">0,00 €</text><text x="1066" y="428">0,00 €</text><text x="1201" y="428">0,00 €</text>
<text x="770" y="446">0</text><text x="862" y="446">0,00 €</text><text x="959" y="446">0,00 €</text><text x="1066" y="446">0,00 €</text><text x="1201" y="446">0,00 €</text>
<text x="770" y="464">0</text><text x="862" y="464">0,00 €</text><text x="959" y="464">0,00 €</text><text x="1066" y="464">0,00 €</text><text x="1201" y="464">0,00 €</text>
<text x="770" y="482">0</text><text x="862" y="482">0,00 €</text><text x="959" y="482">0,00 €</text><text x="1066" y="482">0,00 €</text><text x="1201" y="482">0,00 €</text>
<text x="770" y="501">0</text><text x="862" y="501">0,00 €</text><text x="959" y="501">0,00 €</text><text x="1066" y="501">0,00 €</text><text x="1201" y="501">0,00 €</text>
<text x="770" y="519">0</text><text x="862" y="519">0,00 €</text><text x="959" y="519">0,00 €</text><text x="1066" y="519">0,00 €</text><text x="1201" y="519">0,00 €</text>
<text x="770" y="537">0</text><text x="862" y="537">0,00 €</text><text x="959" y="537">0,00 €</text><text x="1066" y="537">0,00 €</text><text x="1201" y="537">0,00 €</text>
<text x="770" y="555">0</text><text x="862" y="555">0,00 €</text><text x="959" y="555">0,00 €</text><text x="1066" y="555">0,00 €</text><text x="1201" y="555">0,00 €</text>
<text x="770" y="573">0</text><text x="862" y="573">0,00 €</text><text x="959" y="573">0,00 €</text><text x="1066" y="573">0,00 €</text><text x="1201" y="573">0,00 €</text>
<text x="770" y="591">0</text><text x="862" y="591">0,00 €</text><text x="959" y="591">0,00 €</text><text x="1066" y="591">0,00 €</text><text x="1201" y="591">0,00 €</text>
<text x="770" y="609">0</text><text x="862" y="609">0,00 €</text><text x="959" y="609">0,00 €</text><text x="1066" y="609">0,00 €</text><text x="1201" y="609">0,00 €</text>
<text x="770" y="625">0</text><text x="862" y="625">0,00 €</text><text x="959" y="625">0,00 €</text><text x="1066" y="625">0,00 €</text><text x="1201" y="625">0,00 €</text>
</g>
<text x="56" y="392" font-size="42" fill="#ec0c0c" textLength="564" lengthAdjust="spacingAndGlyphs">Hier geben Sie die Daten ein!</text>
</g>

<!-- vertical scrollbar -->
<rect x="1303" y="112" width="16" height="513" fill="#efefef"/>
<path d="M1307 124l3.500-3.500 3.500 3.500M1307 615l3.500 3.500 3.500-3.500" fill="none" stroke="#555" stroke-width="1.500"/>
<rect x="1303" y="129" width="15" height="22" fill="#cdcdcd"/>

<!-- sidebar -->
<rect x="1319" y="76" width="7" height="582" fill="#efefef"/>
<rect x="1326" y="76" width="40" height="582" fill="#f0f0f0"/>
<path d="M1319.500 76v582M1325.500 76v582" stroke="#a8a8a8"/>
<rect x="1319" y="330" width="7" height="73" fill="#666"/>
<path d="M1320 362l5 4-5 4z" fill="#ddd"/>
<path d="M1341 92h8M1341 95h8M1341 98h8" stroke="#2b4f80"/><path d="M1345 100h6l-3 3z" fill="#222"/>
<path d="M1335 115.500h21" stroke="#ddd"/>
<rect x="1330.500" y="119.500" width="31" height="31" rx="4" fill="#f3f3f3" stroke="#bcbcbc"/>
<path d="M1338 126c2-2 5-1 6 1 0 1 0 2 0 3l8 9c2 0 4 1 4 3 0 3-3 4-5 3l-1-3-2-1 0 2c-2-1-3-3-3-5l-7-8c-2 0-4-1-4-3l3 1 2-1z" fill="#e6e6e6" stroke="#9a9a9a"/>
<path d="M1338 160h20v3h-2l-1-1h-3v12h-5v-12h-3l-1 1h-5z" fill="#444"/>
<path d="M1335 165v16h22z" fill="#7cc242" stroke="#4c9020"/><path d="M1339 174v4h5z" fill="#d8efc4"/>
<rect x="1336.500" y="199.500" width="20" height="13" rx="1" fill="#e79a33" stroke="#9a6a1a"/><rect x="1339" y="202" width="15" height="8" fill="#8a8a82"/><path d="M1343 199l3-3 3 3" fill="none" stroke="#888"/><path d="M1346.500 204v6M1343 203l3 3 4-3" stroke="#333" fill="none"/>
<circle cx="1346" cy="240" r="10" fill="#f4f4f4" stroke="#9a9a9a" stroke-width="2"/><path d="M1341 234l6 5-2 2z" fill="#d22"/><path d="M1351 246l-6-5 2-2z" fill="#2f6db0"/>
<text x="1336" y="283" font-size="24" font-style="italic" font-weight="bold" font-family="Liberation Serif" textLength="20" lengthAdjust="spacingAndGlyphs" fill="#7d5a9a">fx</text>
<path d="M1354 265l1 2 2 .5-1.500 1.500.5 2-2-1-2 1 .5-2-1.500-1.500 2-.5zM1346 266l1 2 2 .5-1.500 1.500.5 2-2-1-2 1 .5-2-1.500-1.500 2-.5zM1339 269l1 1.500h1.500l-1 1 .5 1.500-1.500-.5-1.500.5.500-1.500-1-1H1338z" fill="#e9c52e"/>

<!-- bottom -->
<rect x="0" y="625" width="1319" height="33" fill="#ececec"/>
<path d="M1319.500 625v33M1325.500 625v33" stroke="#a8a8a8"/>
<rect x="16" y="625" width="586" height="15" fill="#c8c8c8"/>
<path d="M10 630l-3.500 3 3.500 3M1288 630l3.500 3-3.500 3" fill="none" stroke="#444" stroke-width="1.500"/>
<rect x="1297" y="625" width="4" height="16" fill="#aaa"/><path d="M1299.500 627v11" stroke="#222"/>
<text x="39" y="638" font-size="12" fill="#d5d5d5">blog</text>
<!-- sheet nav -->
<g fill="#bbb"><path d="M12 644h2v12h-2zM20 644l-6 6 6 6zM37 644l-6 6 6 6zM45 644l6 6-6 6zM62 644l6 6-6 6zM67 644h2v12h-2z"/></g>
<path d="M85 645h3v3h3v3h-3v3h-3v-3h-3v-3h3z" fill="#000" transform="translate(2.500 0)"/>
<!-- tabs -->
<path d="M103.500 641v17" stroke="#777"/>
<rect x="104" y="641" width="43" height="13" fill="#f6f6f6"/><rect x="104" y="654" width="44" height="4" fill="#f5f396"/>
<rect x="147.500" y="641.500" width="64" height="16" fill="#00bff3" stroke="#666"/>
<rect x="211.500" y="641.500" width="59" height="16" fill="#bff000" stroke="#666"/>
<rect x="270.500" y="641.500" width="119" height="16" fill="#f2f2f2" stroke="#666"/>
<rect x="389.500" y="641.500" width="78" height="16" fill="#f2f2f2" stroke="#666"/>
<g font-size="12" text-anchor="middle" fill="#222">
<text x="125" y="653" font-weight="bold">Gas</text><text x="179" y="653">Wasser</text><text x="240" y="653">Strom</text><text x="330" y="653">Gesamtübersicht</text><text x="428" y="653">Anleitung</text>
</g>

<!-- status -->
<rect x="0" y="658" width="1366" height="22" fill="#ececec"/>
<rect y="658" width="1366" height="1" fill="#a9a9a9"/>
<g class="s"><line x1="237.500" y1="661" x2="237.500" y2="677"/><line x1="472.500" y1="661" x2="472.500" y2="677"/><line x1="862.500" y1="661" x2="862.500" y2="677"/><line x1="891.500" y1="661" x2="891.500" y2="677"/><line x1="920.500" y1="661" x2="920.500" y2="677"/><line x1="949.500" y1="661" x2="949.500" y2="677"/><line x1="1181.500" y1="661" x2="1181.500" y2="677"/><line x1="1324.500" y1="661" x2="1324.500" y2="677"/></g>
<g font-size="11.800" fill="#222">
<text x="10" y="674">Blatt 1 von 5</text><text x="481" y="674">PageStyle_Gas</text><text x="1040" y="674">Summe=0</text><text x="1332" y="674">95 %</text>
</g>
<rect x="872" y="666" width="8" height="7" fill="#888"/><path d="M881 665h2v9h-2" fill="none" stroke="#888"/>
<rect x="902.500" y="664.500" width="9" height="10" fill="none" stroke="#bbb"/><path d="M904 669l3 3 4-6" fill="none" stroke="#bbb"/>
<path d="M1192 670h8M1206 670h97M1313 666v8M1309 670h8" stroke="#999" stroke-width="1.500" fill="none"/>
<rect x="1247.500" y="666.500" width="6" height="7" rx="2" fill="#f4f4f4" stroke="#888"/>
</svg>
</body></html>
